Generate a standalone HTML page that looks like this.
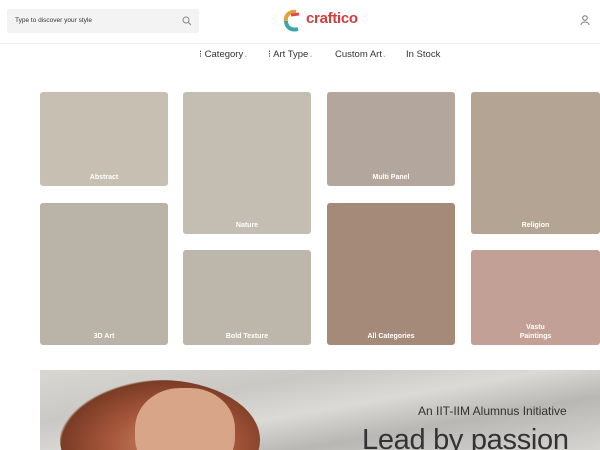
<!DOCTYPE html>
<html><head><meta charset="utf-8"><style>
*{margin:0;padding:0;box-sizing:border-box}
html,body{width:600px;height:450px;overflow:hidden}
body{background:#fff;font-family:"Liberation Sans",sans-serif;position:relative}
.search{position:absolute;left:7px;top:9px;width:192px;height:24px;background:#f3f3f3;border-radius:2px;font-size:6.5px;color:#333;padding:8px 0 0 8px}
.hr{position:absolute;left:0;top:43px;width:600px;height:1px;background:#eee}
.nav{position:absolute;top:49px;font-size:9.5px;color:#333}
.t{position:absolute;border-radius:3px;color:#fff;font-size:7px;font-weight:bold;text-align:center}
.t span{position:absolute;left:0;right:0;bottom:4px;line-height:9px}
.banner{position:absolute;left:40px;top:370px;width:560px;height:80px;background:linear-gradient(170deg,#d9d7d2 0%,#c9c8c4 30%,#dcdad6 50%,#b8b7b4 70%,#d6d5d1 100%);overflow:hidden}
</style></head><body>
<div class="search">Type to discover your style
<svg style="position:absolute;right:7px;top:7px" width="10" height="10" viewBox="0 0 10 10"><circle cx="4" cy="4" r="3" fill="none" stroke="#888" stroke-width="1"/><path d="M6.3 6.3L9 9" stroke="#888"/></svg></div>
<svg style="position:absolute;left:283px;top:9px" width="22" height="24" viewBox="0 0 22 24"><path d="M13 3C6 2 2 7 3 12" stroke="#e4a03a" stroke-width="4" fill="none"/><path d="M3 12C3 18 8 22 15 20" stroke="#3aa6a8" stroke-width="4" fill="none"/><path d="M8 6L16 5" stroke="#e24b4b" stroke-width="3"/></svg>
<div style="position:absolute;left:306px;top:10px;font-size:15px;color:#d23c3c;font-weight:bold;letter-spacing:-.3px">craftico</div>
<svg style="position:absolute;left:580px;top:15px" width="10" height="11" viewBox="0 0 10 11"><circle cx="5" cy="3" r="2.3" fill="none" stroke="#777"/><path d="M1 10C1 6 9 6 9 10" fill="none" stroke="#777"/></svg>
<div class="hr"></div>
<div class="nav" style="left:199px">⁝ Category<span style="font-size:6px;color:#aaa">⌄</span></div>
<div class="nav" style="left:268px">⁝ Art Type<span style="font-size:6px;color:#aaa">⌄</span></div>
<div class="nav" style="left:335px">Custom Art<span style="font-size:6px;color:#aaa">⌄</span></div>
<div class="nav" style="left:406px">In Stock</div>
<div class="t" style="left:40px;top:92px;width:128px;height:94px;background:#c8bfb3"><span>Abstract</span></div>
<div class="t" style="left:40px;top:203px;width:128px;height:142px;background:#b9b3a8"><span>3D Art</span></div>
<div class="t" style="left:183px;top:92px;width:128px;height:142px;background:#c4bdb2"><span>Nature</span></div>
<div class="t" style="left:183px;top:250px;width:128px;height:95px;background:#bdb7ab"><span>Bold Texture</span></div>
<div class="t" style="left:327px;top:92px;width:128px;height:94px;background:#b2a69d"><span>Multi Panel</span></div>
<div class="t" style="left:327px;top:203px;width:128px;height:142px;background:#a58a79"><span>All Categories</span></div>
<div class="t" style="left:471px;top:92px;width:129px;height:142px;background:#b3a493"><span>Religion</span></div>
<div class="t" style="left:471px;top:250px;width:129px;height:95px;background:#c3a096"><span>Vastu<br>Paintings</span></div>
<div class="banner">
<div style="position:absolute;left:20px;top:10px;width:200px;height:120px;border-radius:50%;background:radial-gradient(ellipse at 55% 55%,#c9876a 0%,#a5563a 40%,#7a3b25 70%,rgba(120,60,40,0) 72%)"></div>
<div style="position:absolute;left:95px;top:18px;width:100px;height:90px;border-radius:45%;background:#d9a588"></div>
<div style="position:absolute;left:378px;top:34px;font-size:12px;color:#333">An IIT-IIM Alumnus Initiative</div>
<div style="position:absolute;left:322px;top:54px;font-size:29px;color:#333;letter-spacing:-.3px">Lead by passion</div>
</div>
</body></html>
